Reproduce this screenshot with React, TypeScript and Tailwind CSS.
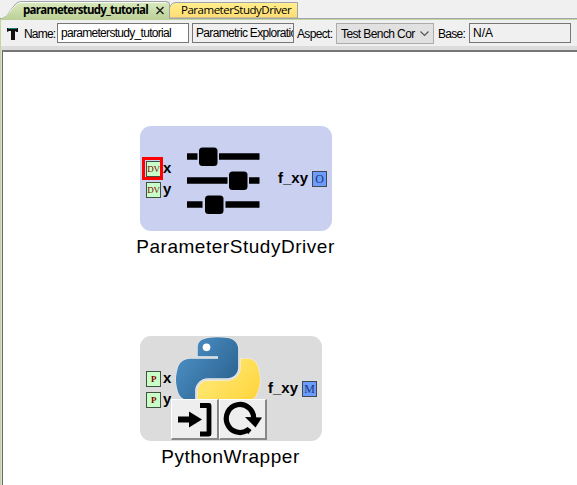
import React, { type ReactNode } from "react";

const SANS = "font-['Liberation_Sans',Arial,sans-serif]";
const TAB = "font-['Open_Sans','Noto_Sans',sans-serif]";

const GREEN_PORT = "border-[#405040] bg-[#c8ffc8] text-[9px] text-[#800000]";
const BLUE_PORT = "border-[#404850] bg-[#6c9cff] text-[12px] text-[#203870]";

function Port({ text, tone }: { text: string; tone: string }) {
  return (
    <div className={`flex h-4 w-[15px] shrink-0 items-center justify-center border font-['Liberation_Serif',serif] leading-none tracking-[-0.3px] ${tone}`}>
      {text}
    </div>
  );
}

function TabStrip() {
  return (
    <div className={`relative h-[19px] shrink-0 bg-[#f0f0f0] ${TAB}`}>
      <svg className="absolute inset-0" width="577" height="20" viewBox="0 0 577 20">
        <defs>
          <linearGradient id="green" x1="0" y1="0" x2="0" y2="1">
            <stop offset="0" stopColor="#d9ebbd" />
            <stop offset="1" stopColor="#bccf98" />
          </linearGradient>
          <linearGradient id="yellow" x1="0" y1="0" x2="0" y2="1">
            <stop offset="0" stopColor="#fff08e" />
            <stop offset="1" stopColor="#ffdc72" />
          </linearGradient>
        </defs>
        <path d="M0 18.5H577" stroke="#a0a4ac" />
        <path d="M169.500 18V8C170 5 173 2.500 176 2.500H297.500V18Z" fill="url(#yellow)" stroke="#a0a3ad" />
        <path d="M0 20V18.500C6 18 10 10 14 6C16 3 18 1.500 22 1.500H166Q169.500 1.500 169.500 4V20Z" fill="url(#green)" />
        <path d="M0 18.500C6 18 10 10 14 6C16 3 18 1.500 22 1.500H166Q169.500 1.500 169.500 4V18" fill="none" stroke="#a0a3ad" />
        <path d="M1 17.500C6 17 10 11 15 6C17 4 19 2.500 22 2.500H166" fill="none" stroke="#f7faf0" />
        <path d="M156.500 7L163.500 14M163.500 7L156.500 14" stroke="#222" strokeWidth="1.500" />
      </svg>
      <div className="relative flex h-full whitespace-nowrap pl-[23px] text-[11.5px] leading-[20px] text-black">
        <span className="w-[158px] font-bold tracking-[-0.75px]">parameterstudy_tutorial</span>
        <span className="tracking-[-0.48px]">ParameterStudyDriver</span>
      </div>
    </div>
  );
}

function Toolbar() {
  return (
    <div className={`flex h-[27px] shrink-0 items-start whitespace-nowrap border-l border-t border-[#c3d69b] bg-[#f0f0f0] pl-[6px] pt-[3px] text-[12px] leading-[22px] text-black ${SANS}`}>
      <svg className="mt-[5px]" width="12" height="12" viewBox="0 0 12 12">
        <path d="M0 0H11V4H9.500L8 3V12H4V3H2L0 4Z" fill="#111" />
        <path d="M1 .5H10" stroke="#247a80" />
      </svg>
      <span className="ml-[5px] w-[33px] tracking-[-0.8px]">Name:</span>
      <div className="h-[20px] w-[132px] border border-[#777] bg-white pl-[3px] leading-[18px] tracking-[-0.7px]">parameterstudy_tutorial</div>
      <div className="ml-[3px] h-[20px] w-[102px] overflow-hidden border border-[#777] pl-[3px] leading-[18px]">
        <div className="tracking-[-0.68px]">Parametric Exploratic</div>
      </div>
      <span className="ml-[3px] w-[39px] tracking-[-0.65px]">Aspect:</span>
      <div className="flex h-[21px] w-[98px] border border-[#adadad] bg-[#e1e1e1] pl-1 leading-[20px]">
        <div className="w-[74px] tracking-[-0.6px]">Test Bench Cor</div>
        <svg className="ml-[5px] mt-[7px]" width="9" height="6" viewBox="0 0 9 6"><path d="M.5 .5L4.500 4.500L8.500 .5" fill="none" stroke="#555" strokeWidth="1.200" /></svg>
      </div>
      <span className="ml-[4px] w-[31px] tracking-[-0.7px]">Base:</span>
      <div className="h-[20px] w-[102px] border border-[#777] pl-[3px] leading-[18px]">N/A</div>
    </div>
  );
}

function Inputs({ text, tone }: { text: string; tone: string }) {
  return (
    <div className="flex flex-col gap-[5px] pt-[35px]">
      {["x", "y"].map((name) => (
        <div key={name} className="flex h-4 gap-[2px] leading-[14px]">
          <Port text={text} tone={tone} />
          <span>{name}</span>
        </div>
      ))}
    </div>
  );
}

function DiagramNode({ place, body, title, input, inputTone, output, children }: {
  place: string; body: string; title: string; input: string; inputTone: string; output: string; children: ReactNode;
}) {
  return (
    <div className={`absolute flex flex-col items-center gap-[5px] text-black ${SANS} ${place}`}>
      <div className={`relative flex h-[105px] w-full shrink-0 justify-between rounded-[11px] pl-[6px] pr-[5px] text-[15px] font-bold ${body}`}>
        <Inputs text={input} tone={inputTone} />
        <div className="flex gap-[4px] pt-[45px] leading-[14px]">
          <span>f_xy</span>
          <Port text={output} tone={`font-normal ${BLUE_PORT}`} />
        </div>
        {children}
      </div>
      <span className="whitespace-nowrap pr-px text-[19px] leading-[22px] tracking-[0.53px]">{title}</span>
    </div>
  );
}

function Sliders() {
  return (
    <svg className="absolute inset-0" width="192" height="105" viewBox="0 0 192 105">
      <path d="M47 30.500H57.500M79 30.500H119.500M47 54.500H87.500M109 54.500H119.500M47 78.500H62.500M85.500 78.500H119.500" stroke="#000" strokeWidth="6.300" />
      <rect x="59" y="21.500" width="18.500" height="18.500" rx="3.500" />
      <rect x="89" y="45.500" width="18.500" height="18.500" rx="3.500" />
      <rect x="65" y="69.500" width="18.500" height="18.500" rx="3.500" />
    </svg>
  );
}

function PythonLogo() {
  return (
    <svg className="absolute left-[25px] top-0" width="105" height="92" viewBox="0 0 105 92">
      <defs>
        <linearGradient id="pyBlue" x1="0" y1="0.1" x2="0.8" y2="0.7">
          <stop offset="0" stopColor="#4f94ca" />
          <stop offset="1" stopColor="#306998" />
        </linearGradient>
        <linearGradient id="pyYellow" x1="0.8" y1="0.8" x2="0.3" y2="0.3">
          <stop offset="0" stopColor="#ffd43b" />
          <stop offset="1" stopColor="#ffe468" />
        </linearGradient>
      </defs>
      <g transform="translate(.5 -.4) scale(.82)" stroke="#eee" strokeWidth="1.500" paintOrder="stroke">
        <path fill="url(#pyYellow)" d="M91.682 28.380v10.966c0 8.500-7.208 15.655-15.426 15.655H51.591c-6.756 0-12.346 5.783-12.346 12.549v23.515c0 6.691 5.818 10.628 12.346 12.547 7.816 2.297 15.312 2.713 24.665 0 6.216-1.801 12.346-5.423 12.346-12.547v-9.412H63.938v-3.138h37.012c7.176 0 9.852-5.005 12.348-12.519 2.578-7.735 2.467-15.174 0-25.096-1.774-7.145-5.161-12.521-12.348-12.521z" />
        <path fill="url(#pyBlue)" d="M63.391 1.988c-4.222.02-8.252.379-11.800 1.007-10.450 1.846-12.346 5.710-12.346 12.837v9.411h24.693v3.137H29.977c-7.176 0-13.460 4.313-15.426 12.521-2.268 9.405-2.368 15.275 0 25.096 1.755 7.311 5.947 12.519 13.124 12.519h8.491V67.234c0-8.151 7.051-15.340 15.426-15.340h24.665c6.866 0 12.346-5.654 12.346-12.548V15.833c0-6.693-5.646-11.720-12.346-12.837-4.244-.706-8.645-1.027-12.866-1.008z" />
        <circle cx="50.037" cy="14.260" r="4.700" fill="#fff" stroke="none" />
      </g>
    </svg>
  );
}

const BUTTON = "h-[41px] w-[48px] border-b-2 border-l border-r-2 border-t border-b-[#888] border-l-[#fff] border-r-[#888] border-t-[#fff] bg-[#eee]";

function NodeButtons() {
  return (
    <div className="absolute left-[31px] top-[63px] flex">
      <div className={BUTTON}>
        <svg width="45" height="38" viewBox="0 0 45 38">
          <path d="M6 16.500H17V11.500L30 19.500L17 27.500V22.500H6Z" />
          <path d="M28 5.500H37V34H28" fill="none" stroke="#000" strokeWidth="4.800" strokeLinejoin="round" />
        </svg>
      </div>
      <div className={BUTTON}>
        <svg width="45" height="38" viewBox="0 0 45 38">
          <path d="M30 32L27.500 30.200A13.700 14 0 1 1 33.700 18.500" fill="none" stroke="#000" strokeWidth="5.200" />
          <path d="M25 17L42 17.500L35.500 27.500Z" />
        </svg>
      </div>
    </div>
  );
}

export default function App() {
  return (
    <div className="flex h-[485px] w-[577px] flex-col overflow-hidden bg-[#dcdcdc]">
      <TabStrip />
      <Toolbar />
      <div className="flex flex-1 flex-col border-l border-[#c3d69b] pl-px pt-[4px]">
        <main className="relative flex-1 border-l border-t-2 border-[#696969] border-t-[#777] bg-white">
          <DiagramNode place="left-[137px] top-[74px] w-[192px]" body="bg-[#cad0f0]" title="ParameterStudyDriver" input="DV" inputTone={`font-normal ${GREEN_PORT}`} output="O">
            <Sliders />
            <div className="absolute left-[2px] top-[31px] h-[23px] w-[21px] border-[3px] border-[#f00]" />
          </DiagramNode>
          <DiagramNode place="left-[137px] top-[284px] w-[182px]" body="bg-[#dcdcdc]" title="PythonWrapper" input="P" inputTone={GREEN_PORT} output="M">
            <PythonLogo />
            <NodeButtons />
          </DiagramNode>
        </main>
      </div>
    </div>
  );
}
